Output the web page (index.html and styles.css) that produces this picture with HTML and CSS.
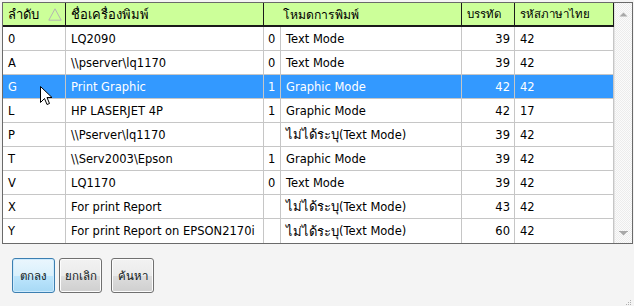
FILE: index.html
```html
<!DOCTYPE html>
<html>
<head>
<meta charset="utf-8">
<link rel="stylesheet" href="styles.css">
</head>
<body>
<div class="window">
  <div class="grid-box">
    <div class="grid">
      <div class="row head">
        <div class="hc c1"><span class="th">ลำดับ</span>
          <svg class="sort" width="14" height="13" viewBox="0 0 14 13"><path d="M7 0.8 L13.2 12.2 L0.8 12.2 Z" fill="none" stroke="#b4b4b4" stroke-width="1"/></svg>
        </div>
        <div class="hc"><span class="th">ชื่อเครื่องพิมพ์</span></div>
        <div class="hc span2"><span class="th-s">โหมดการพิมพ์</span></div>
        <div class="hc">บรรทัด</div>
        <div class="hc">รหัสภาษาไทย</div>
      </div>
      <div class="row">
        <div class="c">0</div><div class="c">LQ2090</div><div class="c n">0</div><div class="c">Text Mode</div><div class="c r">39</div><div class="c">42</div>
      </div>
      <div class="row">
        <div class="c">A</div><div class="c">\\pserver\lq1170</div><div class="c n">0</div><div class="c">Text Mode</div><div class="c r">39</div><div class="c">42</div>
      </div>
      <div class="row sel">
        <div class="c">G</div><div class="c">Print Graphic</div><div class="c n">1</div><div class="c">Graphic Mode</div><div class="c r">42</div><div class="c">42</div>
      </div>
      <div class="row">
        <div class="c">L</div><div class="c">HP LASERJET 4P</div><div class="c n">1</div><div class="c">Graphic Mode</div><div class="c r">42</div><div class="c">17</div>
      </div>
      <div class="row">
        <div class="c">P</div><div class="c">\\Pserver\lq1170</div><div class="c n"></div><div class="c"><span class="th-m">ไม่ได้ระบุ</span>(Text Mode)</div><div class="c r">39</div><div class="c">42</div>
      </div>
      <div class="row">
        <div class="c">T</div><div class="c">\\Serv2003\Epson</div><div class="c n">1</div><div class="c">Graphic Mode</div><div class="c r">39</div><div class="c">42</div>
      </div>
      <div class="row">
        <div class="c">V</div><div class="c">LQ1170</div><div class="c n">0</div><div class="c">Text Mode</div><div class="c r">39</div><div class="c">42</div>
      </div>
      <div class="row">
        <div class="c">X</div><div class="c">For print Report</div><div class="c n"></div><div class="c"><span class="th-m">ไม่ได้ระบุ</span>(Text Mode)</div><div class="c r">43</div><div class="c">42</div>
      </div>
      <div class="row last">
        <div class="c">Y</div><div class="c">For print Report on EPSON2170i</div><div class="c n"></div><div class="c"><span class="th-m">ไม่ได้ระบุ</span>(Text Mode)</div><div class="c r">60</div><div class="c">42</div>
      </div>
    </div>
    <div class="vscroll">
      <svg width="9" height="5" viewBox="0 0 9 5"><path d="M0.5 4.5 L4.5 0.5 L8.5 4.5 Z" fill="#a8a8a8"/></svg>
      <svg width="9" height="5" viewBox="0 0 9 5"><path d="M0.5 0.5 L8.5 0.5 L4.5 4.5 Z" fill="#a8a8a8"/><rect x="0" y="0" width="9" height="1" fill="#a8a8a8"/></svg>
    </div>
  </div>
  <div class="buttons">
    <button class="btn focus">ตกลง</button>
    <button class="btn">ยกเลิก</button>
    <button class="btn far">ค้นหา</button>
  </div>
  <svg class="grip" width="7" height="7" viewBox="0 0 7 7">
    <rect x="5" y="1" width="1" height="1" fill="#b0b0b0"/>
    <rect x="3" y="3" width="1" height="1" fill="#b0b0b0"/><rect x="5" y="3" width="1" height="1" fill="#b0b0b0"/>
    <rect x="1" y="5" width="1" height="1" fill="#b0b0b0"/><rect x="3" y="5" width="1" height="1" fill="#b0b0b0"/><rect x="5" y="5" width="1" height="1" fill="#b0b0b0"/>
  </svg>
  <svg class="cursor" width="13" height="20" viewBox="0 0 13 20">
    <path d="M0.5 0.5 L0.5 16.5 L4.5 12.5 L7 18.5 L9.5 17.5 L7 11.5 L12 11.5 Z" fill="#fff" stroke="#000" stroke-width="1" stroke-linejoin="miter"/>
  </svg>
</div>
</body>
</html>
```
FILE: styles.css
```css
html, body {
  margin: 0;
  padding: 0;
  background: #f4f4f4;
}
.window {
  position: relative;
  width: 634px;
  height: 306px;
  font-family: "DejaVu Sans", "Noto Sans", sans-serif;
  font-size: 11.5px;
  color: #000;
}
.th { font-size: 13px; }
.th-s { font-size: 12.2px; }
.th-m { font-size: 13px; }
.grid-box {
  margin: 2px 0 0 2px;
  width: 629px;
  border: 1px solid #6a6a6a;
  display: flex;
  background: #fff;
}
.grid {
  width: 611px;
  display: grid;
  grid-template-columns: 63px 198px 17px 181px 53px 99px;
  grid-auto-rows: 24px;
}
.row { display: contents; }
.head > div {
  background: #ccff99;
  border-right: 1px solid #1a1a1a;
  border-bottom: 2px solid #1a1a1a;
  box-sizing: border-box;
  padding-left: 5px;
  display: flex;
  align-items: center;
  height: 24px;
}
.head .c1 {
  justify-content: space-between;
  padding-right: 3px;
}
.head .span2 {
  grid-column: span 2;
  padding-left: 19px;
}
.c {
  box-sizing: border-box;
  border-right: 1px solid #c6c6c6;
  border-bottom: 1px solid #c6c6c6;
  padding: 0 4px 0 5px;
  display: flex;
  align-items: center;
  white-space: nowrap;
  overflow: hidden;
}
.c.n { padding-left: 4px; }
.c.r { justify-content: flex-end; padding-right: 4px; }
.last .c { border-bottom: none; }
.sel .c {
  background: #3399ff;
  color: #fff;
}
.vscroll {
  width: 18px;
  border-left: 1px solid #e2e2e2;
  box-sizing: border-box;
  background-color: #f4f4f4;
  background-image: repeating-conic-gradient(#fbfbfb 0 25%, #ececec 0 50%);
  background-size: 2px 2px;
  display: flex;
  flex-direction: column;
  justify-content: space-between;
  align-items: center;
  padding: 9px 0 7px 0;
}
.buttons {
  display: flex;
  margin: 14px 0 0 12px;
}
.btn {
  width: 43px;
  height: 35px;
  box-sizing: border-box;
  border: 1px solid #707070;
  border-radius: 3px;
  background: linear-gradient(#f2f2f2 0%, #ebebeb 50%, #dddddd 51%, #cfcfcf 100%);
  font-family: "DejaVu Sans", "Noto Sans", sans-serif;
  font-size: 11.5px;
  color: #101820;
  padding: 0;
  margin-right: 4px;
  box-shadow: inset 0 0 0 1px #fcfcfc;
}
.btn.focus {
  border-color: #3c7fb1;
  background: linear-gradient(#eaf6fd 0%, #d9f0fc 50%, #bee6fd 51%, #a7d9f5 100%);
  box-shadow: inset 0 0 0 1px #cdeafd;
}
.btn.far { margin-left: 5px; }
.grip {
  position: absolute;
  right: 2px;
  bottom: 2px;
}
.cursor {
  position: absolute;
  left: 40px;
  top: 84px;
}
```
